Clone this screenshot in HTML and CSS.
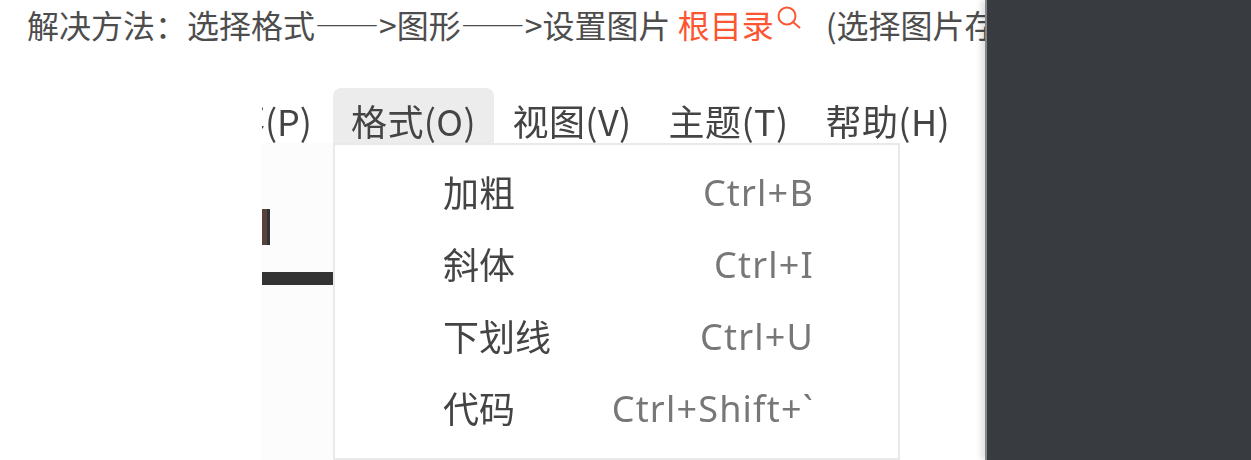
FILE: index.html
```html
<!DOCTYPE html>
<html lang="zh-CN">
<head>
    <meta charset="UTF-8">
    <meta name="viewport" content="width=device-width, initial-scale=1.0">
    <title>解决方法</title>
    <link rel="stylesheet" href="styles.css">
</head>
<body>
    <main class="article">
        <p class="line">解决方法：选择格式——&gt;图形——&gt;设置图片 <a class="keyword" href="#">根目录<svg class="search-icon" viewBox="0 0 26 24" aria-hidden="true"><circle cx="11" cy="10" r="8.5"/><path d="M17 16l7 6"/></svg></a><span class="note">(选择图片存放</span></p>

        <div class="shot">
            <nav class="menubar">
                <span class="menu-item first">段落(P)</span>
                <span class="menu-item active">格式(O)</span>
                <span class="menu-item">视图(V)</span>
                <span class="menu-item">主题(T)</span>
                <span class="menu-item">帮助(H)</span>
            </nav>
            <div class="shot-body">
                <div class="editor">
                    <div class="glyph-end"></div>
                    <div class="rule"></div>
                </div>
                <ul class="dropdown">
                    <li><span>加粗</span><span class="key">Ctrl+B</span></li>
                    <li><span>斜体</span><span class="key">Ctrl+I</span></li>
                    <li><span>下划线</span><span class="key">Ctrl+U</span></li>
                    <li><span>代码</span><span class="key">Ctrl+Shift+`</span></li>
                </ul>
            </div>
        </div>
    </main>
    <aside class="side-panel"></aside>
</body>
</html>
```

FILE: styles.css
```css
html, body {
    height: 460px;
}

body {
    display: flex;
    margin: 0;
    overflow: hidden;
    background: #fff;
    font-family: "Noto Sans CJK SC", "Noto Sans", sans-serif;
}

.article {
    flex: 1;
    min-width: 0;
    overflow: hidden;
}

.line {
    margin: 0;
    padding-left: 27px;
    height: 88px;
    font-size: 32px;
    line-height: 48px;
    color: #4d4d4d;
    white-space: nowrap;
}

.keyword {
    color: #fc5531;
    text-decoration: none;
}

.search-icon {
    width: 26px;
    height: 24px;
    margin-left: 2px;
    vertical-align: 8px;
    fill: none;
    stroke: #fc5531;
    stroke-width: 2;
}

.note {
    margin-left: 24px;
}

.shot {
    margin-left: 262px;
    color: #444;
    font-size: 36px;
    filter: blur(0.4px);
}

.menubar {
    display: flex;
    height: 55px;
    white-space: nowrap;
}

.menu-item {
    padding: 10px 18.5px 0;
    line-height: 44px;
    letter-spacing: 0.4px;
}

.menu-item.first {
    width: 71px;
    box-sizing: border-box;
    padding: 10px 21px 0 0;
    display: flex;
    justify-content: flex-end;
    overflow: hidden;
    letter-spacing: 0;
}

.menu-item.active {
    padding: 10px 18px 0;
    background: #ececec;
    border-radius: 8px 8px 0 0;
}

.shot-body {
    display: flex;
    height: 317px;
}

.editor {
    width: 71px;
    background: #fcfcfc;
}

.glyph-end {
    width: 5px;
    height: 36px;
    margin-top: 66px;
    background: #5a4238;
    border-right: 3px solid #2e343a;
}

.rule {
    height: 13px;
    margin-top: 27px;
    background: #333;
}

.dropdown {
    width: 567px;
    box-sizing: border-box;
    margin: 0;
    padding: 10px 84px 0 108px;
    list-style: none;
    background: #fff;
    border: 2px solid #e9e9e9;
}

.dropdown li {
    display: flex;
    justify-content: space-between;
    height: 72px;
    line-height: 72px;
}

.key {
    margin-top: 2px;
    color: #777;
    font-family: "Noto Sans", sans-serif;
    font-size: 36px;
    letter-spacing: 1.2px;
}

.side-panel {
    flex: 0 0 264px;
    background: #383b3f;
    border-left: 2px solid #85878a;
    box-shadow: -4px 0 6px rgba(0, 0, 0, 0.12);
}
```
